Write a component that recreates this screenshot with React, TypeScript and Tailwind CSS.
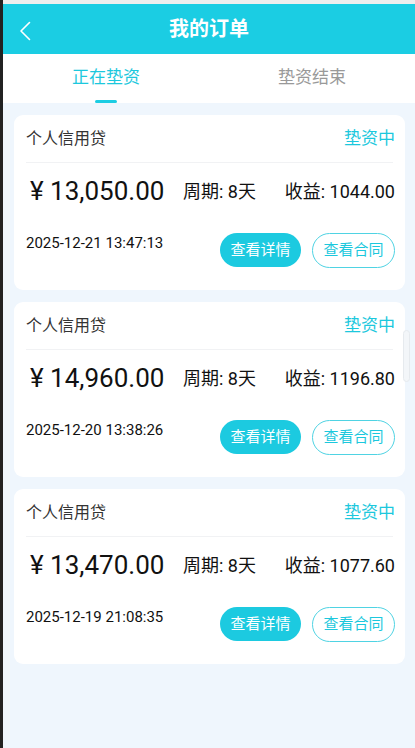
import React from "react";

const orders = [
  { amount: "13,050.00", income: "1044.00", date: "2025-12-21 13:47:13" },
  { amount: "14,960.00", income: "1196.80", date: "2025-12-20 13:38:26" },
  { amount: "13,470.00", income: "1077.60", date: "2025-12-19 21:08:35" },
];

const font = { fontFamily: 'Roboto, "Noto Sans CJK SC", sans-serif' };

function Card({ amount, income, date }: { amount: string; income: string; date: string }) {
  return (
    <div className="bg-white rounded-[9px] px-3 h-[175px] flex flex-col">
      <div className="h-[48px] flex items-center justify-between border-b border-[#f1f2f4]">
        <span className="text-[16px] text-[#333]">个人信用贷</span>
        <span className="text-[17px] text-[#1cc8dd] mr-[-2px]">垫资中</span>
      </div>
      <div className="h-[57px] flex items-center">
        <span className="text-[26px] text-[#111] ml-[4px] w-[133px]">¥&nbsp;{amount}</span>
        <span className="text-[18px] text-[#111] ml-[20px]">周期: 8天</span>
        <span className="flex-1" />
        <span className="text-[18px] text-[#111] mr-[-2px]">收益: {income}</span>
      </div>
      <div className="flex items-start justify-between mt-[13px]">
        <span className="text-[15px] text-[#111] leading-[20px]">{date}</span>
        <div className="flex gap-[11px] mr-[-2px]">
          <button className="w-[81px] h-[34px] rounded-full bg-[#1ccae0] text-white text-[15px]">
            查看详情
          </button>
          <button className="w-[83px] h-[35px] rounded-full border border-[#4fd3e3] text-[#1cc8dd] text-[15px] bg-white">
            查看合同
          </button>
        </div>
      </div>
    </div>
  );
}

export default function App() {
  return (
    <div className="w-[415px] h-[748px] flex bg-[#222] overflow-hidden" style={font}>
      <div className="w-[3px] shrink-0" />
      <div className="flex-1 flex flex-col bg-[#eff6fd] relative">
        <div className="h-[4px] bg-[#eeeeee]" />
        <div className="h-[50px] bg-[#1bcde3] flex items-center relative">
          <svg className="absolute left-[15px] top-[17px]" width="14" height="20" viewBox="0 0 14 20">
            <path d="M11.5 1.5 L3 10 L11.5 18.5" stroke="white" strokeWidth="1.6" fill="none" strokeLinecap="round" strokeLinejoin="round" />
          </svg>
          <div className="flex-1 text-center text-white text-[20px] font-bold">我的订单</div>
        </div>
        <div className="h-[49px] bg-white flex">
          <div className="flex-1 flex flex-col items-center justify-end">
            <span className="text-[17px] text-[#1cc8dd] leading-[24px]">正在垫资</span>
            <div className="w-[22px] h-[3px] bg-[#1ccde3] mt-[11px] rounded-full" />
          </div>
          <div className="flex-1 flex flex-col items-center justify-end">
            <span className="text-[17px] text-[#999] leading-[24px]">垫资结束</span>
            <div className="h-[3px] mt-[11px]" />
          </div>
        </div>
        <div className="flex flex-col gap-[12px] pt-[12px] pl-[11px] pr-[10px]">
          {orders.map((o) => (
            <Card key={o.date} {...o} />
          ))}
        </div>
        <div className="absolute right-[5px] top-[330px] w-[7px] h-[52px] rounded-full border border-[#e6eaee] bg-[#f3f6f9]" />
      </div>
    </div>
  );
}
